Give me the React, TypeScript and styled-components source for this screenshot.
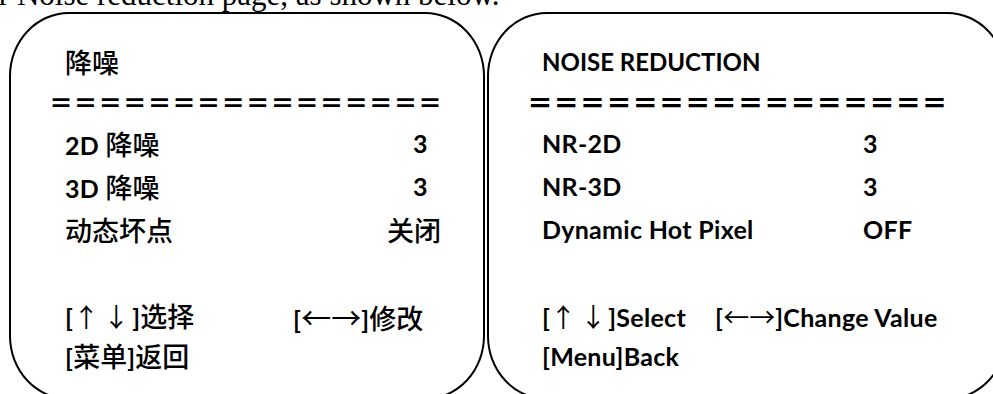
import React from "react";
import styled, { createGlobalStyle } from "styled-components";

const GlobalStyle = createGlobalStyle`
  html, body { margin: 0; padding: 0; background: #fff; }
  body { width: 993px; height: 394px; overflow: hidden; }
`;

const Page = styled.div`
  width: 993px;
  height: 394px;
  overflow: hidden;
  display: flex;
  flex-direction: column;
  color: #000;
`;

const Caption = styled.p`
  margin: -21px 0 0 -27px;
  height: 31px;
  font-family: "Liberation Serif", "Times New Roman", serif;
  font-size: 31px;
  line-height: 31px;
  white-space: nowrap;
`;

const Panels = styled.div`
  display: flex;
  gap: 2px;
  margin: 2px 0 0 9px;
`;

const Panel = styled.section<{ $w: number; $pad: number }>`
  flex: 0 0 ${(p) => p.$w}px;
  height: 388px;
  box-sizing: border-box;
  border: 2px solid #000;
  border-radius: 60px / 64px;
  padding: 28px 0 0 ${(p) => p.$pad}px;
  display: flex;
  flex-direction: column;
  font-family: "Lato", "Noto Sans CJK SC", sans-serif;
  font-size: 25px;
  letter-spacing: 0.3px;
`;

const Title = styled.div<{ $bold?: boolean }>`
  height: 40px;
  line-height: 40px;
  font-size: 24px;
  letter-spacing: 0;
  font-weight: ${(p) => (p.$bold ? 700 : 400)};
  white-space: nowrap;
`;

const Rule = styled.div<{ $size: number; $spacing: number; $shift: number }>`
  height: 40px;
  line-height: 40px;
  font-family: "Noto Sans CJK SC", sans-serif;
  font-weight: 900;
  font-size: ${(p) => p.$size}px;
  letter-spacing: ${(p) => p.$spacing}px;
  margin-left: ${(p) => p.$shift}px;
  white-space: nowrap;
`;

const Row = styled.div<{ $label: number }>`
  display: grid;
  grid-template-columns: ${(p) => p.$label}px auto;
  height: 43px;
  line-height: 43px;
  font-weight: 700;
  white-space: nowrap;
`;

const Value = styled.span<{ $indent?: number }>`
  padding-left: ${(p) => p.$indent ?? 0}px;
`;

const Han = styled.span`
  font-family: "Noto Sans CJK SC", sans-serif;
  font-size: 27px;
  font-weight: 500;
  letter-spacing: 0;
`;

const Spacer = styled.div`
  height: 45px;
`;

const Hint = styled.div<{ $first: number }>`
  display: grid;
  grid-template-columns: ${(p) => p.$first}px auto;
  height: 40px;
  line-height: 40px;
  font-weight: 700;
  white-space: nowrap;
`;

const Arrow = styled.span<{ $size?: number; $before?: number; $after?: number }>`
  font-family: "Noto Sans CJK SC", sans-serif;
  font-size: ${(p) => p.$size ?? 26}px;
  font-weight: 400;
  letter-spacing: 0;
  margin: 0 ${(p) => p.$after ?? 0}px 0 ${(p) => p.$before ?? 0}px;
`;

export default function App() {
  return (
    <Page>
      <GlobalStyle />
      <Caption>for Noise reduction page, as shown below.</Caption>
      <Panels>
        <Panel $w={476} $pad={54}>
          <Title>
            <Han>降噪</Han>
          </Title>
          <Rule $size={24} $spacing={0.6} $shift={-16}>
            ＝＝＝＝＝＝＝＝＝＝＝＝＝＝＝＝
          </Rule>
          <Row $label={322}>
            <span>
              2D <Han>降噪</Han>
            </span>
            <Value $indent={26}>3</Value>
          </Row>
          <Row $label={322}>
            <span>
              3D <Han>降噪</Han>
            </span>
            <Value $indent={26}>3</Value>
          </Row>
          <Row $label={322}>
            <Han>动态坏点</Han>
            <Value>
              <Han>关闭</Han>
            </Value>
          </Row>
          <Spacer />
          <Hint $first={228}>
            <span>
              [<Arrow>↑</Arrow>
              <Arrow $before={4} $after={3}>↓</Arrow>]<Han>选择</Han>
            </span>
            <span>
              [<Arrow $size={30}>←→</Arrow>]<Han>修改</Han>
            </span>
          </Hint>
          <Hint $first={228}>
            <span>
              [<Han>菜单</Han>]<Han>返回</Han>
            </span>
          </Hint>
        </Panel>
        <Panel $w={520} $pad={53}>
          <Title $bold>NOISE REDUCTION</Title>
          <Rule $size={26} $spacing={0.3} $shift={-15}>
            ＝＝＝＝＝＝＝＝＝＝＝＝＝＝＝＝
          </Rule>
          <Row $label={321}>
            <span>NR-2D</span>
            <Value>3</Value>
          </Row>
          <Row $label={321}>
            <span>NR-3D</span>
            <Value>3</Value>
          </Row>
          <Row $label={321}>
            <span>Dynamic Hot Pixel</span>
            <Value>OFF</Value>
          </Row>
          <Spacer />
          <Hint $first={173}>
            <span>
              [<Arrow>↑</Arrow>
              <Arrow $before={4} $after={2}>↓</Arrow>]Select
            </span>
            <span>
              [<Arrow>←→</Arrow>]Change Value
            </span>
          </Hint>
          <Hint $first={173}>
            <span>[Menu]Back</span>
          </Hint>
        </Panel>
      </Panels>
    </Page>
  );
}
